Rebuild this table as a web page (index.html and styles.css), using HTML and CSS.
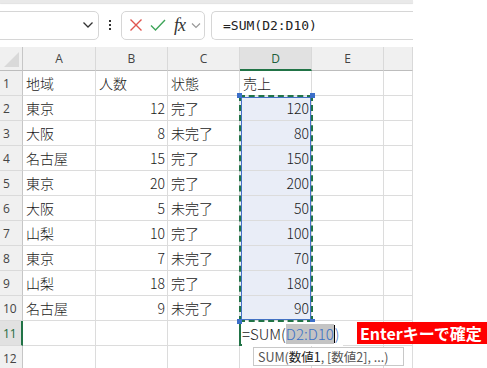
FILE: index.html
```html
<!DOCTYPE html>
<html lang="ja">
<head>
<meta charset="utf-8">
<link rel="stylesheet" href="styles.css">
</head>
<body>
<div class="app">
  <div class="topstrip"></div>
  <div class="fbar">
    <div class="namebox">
      <svg class="chev" width="12" height="8" viewBox="0 0 12 8"><path d="M1.5 1.5 L6 6 L10.5 1.5" fill="none" stroke="#333" stroke-width="1.3"/></svg>
    </div>
    <div class="dots"><span></span><span></span><span></span></div>
    <div class="fnbox">
      <svg width="14" height="14" viewBox="0 0 14 14"><path d="M1.5 1.5 L12.5 12.5 M12.5 1.5 L1.5 12.5" stroke="#e0554f" stroke-width="1.4" fill="none"/></svg>
      <svg width="16" height="14" viewBox="0 0 16 14"><path d="M1 7.5 L5.5 12 L15 2" stroke="#3fa55a" stroke-width="1.4" fill="none"/></svg>
      <span class="fx">fx</span>
      <svg width="10" height="7" viewBox="0 0 10 7"><path d="M1 1.5 L5 5.5 L9 1.5" fill="none" stroke="#999" stroke-width="1.2"/></svg>
    </div>
    <div class="formula">=SUM(D2:D10)</div>
  </div>
  <div class="sheet">
    <div class="grid">
      <div class="corner"><div class="tri"></div></div>
      <div class="ch">A</div><div class="ch">B</div><div class="ch">C</div><div class="ch chsel">D</div><div class="ch">E</div><div class="ch"></div>

      <div class="rh">1</div><div class="c">地域</div><div class="c">人数</div><div class="c">状態</div><div class="c">売上</div><div class="c"></div><div class="c"></div>
      <div class="rh">2</div><div class="c">東京</div><div class="c n">12</div><div class="c">完了</div><div class="c n sel">120</div><div class="c"></div><div class="c"></div>
      <div class="rh">3</div><div class="c">大阪</div><div class="c n">8</div><div class="c">未完了</div><div class="c n sel">80</div><div class="c"></div><div class="c"></div>
      <div class="rh">4</div><div class="c">名古屋</div><div class="c n">15</div><div class="c">完了</div><div class="c n sel">150</div><div class="c"></div><div class="c"></div>
      <div class="rh">5</div><div class="c">東京</div><div class="c n">20</div><div class="c">完了</div><div class="c n sel">200</div><div class="c"></div><div class="c"></div>
      <div class="rh">6</div><div class="c">大阪</div><div class="c n">5</div><div class="c">未完了</div><div class="c n sel">50</div><div class="c"></div><div class="c"></div>
      <div class="rh">7</div><div class="c">山梨</div><div class="c n">10</div><div class="c">完了</div><div class="c n sel">100</div><div class="c"></div><div class="c"></div>
      <div class="rh">8</div><div class="c">東京</div><div class="c n">7</div><div class="c">未完了</div><div class="c n sel">70</div><div class="c"></div><div class="c"></div>
      <div class="rh">9</div><div class="c">山梨</div><div class="c n">18</div><div class="c">完了</div><div class="c n sel">180</div><div class="c"></div><div class="c"></div>
      <div class="rh">10</div><div class="c">名古屋</div><div class="c n">9</div><div class="c">未完了</div><div class="c n sel">90</div><div class="c"></div><div class="c"></div>
      <div class="rh rhsel">11</div><div class="c"></div><div class="c"></div><div class="c"></div><div class="c active"></div><div class="c"></div><div class="c"></div>
      <div class="rh">12</div><div class="c"></div><div class="c"></div><div class="c"></div><div class="c"></div><div class="c"></div><div class="c"></div>
    </div>
    <div class="range">
      <span class="h tl"></span><span class="h tr"></span><span class="h bl"></span><span class="h br"></span>
    </div>
    <div class="edit">=SUM(<span class="ref">D2:D10</span><span class="caret"></span><span class="par">)</span></div>
    <div class="tip">SUM(<b>数値1</b>, [数値2], ...)</div>
    <div class="label">Enterキーで確定</div>
  </div>
</div>
</body>
</html>
```
FILE: styles.css
```css
* { box-sizing: border-box; }
html, body { margin: 0; padding: 0; background: #fff; }
body { width: 487px; height: 368px; overflow: hidden; font-family: "Noto Sans CJK JP", sans-serif; color: #222; }

.topstrip { height: 3px; width: 413px; background: #e9e9e9; box-shadow: 0 1px 1px rgba(0,0,0,0.12); }

.fbar { height: 44px; width: 413px; display: flex; align-items: center; position: relative; }
.namebox { width: 105px; height: 29px; margin-left: -6px; border: 1px solid #d6d6d6; border-radius: 5px; display: flex; align-items: center; justify-content: flex-end; padding-right: 4px; }
.dots { width: 22px; display: flex; flex-direction: column; align-items: center; gap: 2px; }
.dots span { width: 2px; height: 2px; background: #333; display: block; }
.fnbox { width: 84px; height: 29px; border: 1px solid #d6d6d6; border-radius: 5px; display: flex; align-items: center; padding-left: 7px; gap: 6px; }
.fnbox svg:nth-child(2) { margin-left: 1px; }
.fx { font-family: "Liberation Serif", serif; font-style: italic; font-size: 18px; color: #333; margin-left: 2px; letter-spacing: -1px; line-height: 1; }
.formula { margin-left: 6px; flex: 1; height: 29px; border: 1px solid #d6d6d6; border-right: none; border-radius: 5px 0 0 5px; font-family: "DejaVu Sans Mono", monospace; font-size: 13px; line-height: 27px; padding-left: 11px; color: #222; }

.sheet { position: relative; width: 413px; }
.grid { display: grid; grid-template-columns: 23px 73px 72px 72px 72px 72px 29px; grid-template-rows: 24px repeat(12, 25px); }
.corner { background: #f0f0f0; border-right: 1px solid #c6c6c6; border-bottom: 1px solid #bdbdbd; position: relative; }
.tri { position: absolute; right: 3px; bottom: 3px; width: 0; height: 0; border-left: 15px solid transparent; border-bottom: 15px solid #d9d9d9; }
.ch { background: #f0f0f0; border-right: 1px solid #d9d9d9; border-bottom: 1px solid #bdbdbd; font-family: "Open Sans", sans-serif; font-size: 12px; color: #444; text-align: center; line-height: 23px; }
.chsel { background: #e1e1e1; border-bottom: 2px solid #217346; color: #1d5e3a; }
.rh { background: #f0f0f0; border-right: 1px solid #c6c6c6; border-bottom: 1px solid #dadada; font-family: "Open Sans", sans-serif; font-size: 12px; color: #444; padding-left: 3px; line-height: 25px; }
.rhsel { background: #e1e1e1; border-right: 2px solid #217346; color: #1d6b3c; }
.c { border-right: 1px solid #dcdcdc; border-bottom: 1px solid #dcdcdc; font-size: 14px; font-weight: 300; line-height: 24px; padding: 0 2px 0 3px; white-space: nowrap; overflow: hidden; color: #1a1a1a; }
.n { text-align: right; padding-right: 2px; }
.sel { background: #e9edf7; }
.active { border-left: 2px solid #217346; border-bottom: 2px solid #217346; margin-left: -1px; }

.range { position: absolute; left: 239px; top: 48px; width: 74px; height: 227px; border: 2px dashed #217346; outline: 1px solid #4472c4; outline-offset: -3px; }
.h { position: absolute; width: 5px; height: 5px; background: #3b6fc9; }
.tl { left: -4px; top: -4px; }
.tr { right: -4px; top: -4px; }
.bl { left: -4px; bottom: -4px; }
.br { right: -4px; bottom: -4px; }

.edit { position: absolute; left: 242px; top: 275px; height: 24px; font-size: 15px; font-weight: 300; line-height: 24px; color: #1a1a1a; background: #fff; display: flex; align-items: center; padding-right: 3px; }
.ref { background: #c4c4c4; color: #3a6fc4; line-height: 20px; }
.caret { width: 1px; height: 18px; background: #000; }
.par { color: #3a6fc4; }
.tip { position: absolute; left: 253px; top: 300px; width: 151px; height: 19px; border: 1px solid #c8c8c8; background: #fff; font-size: 12.5px; line-height: 17px; color: #555; padding-left: 4px; white-space: nowrap; overflow: hidden; }
.tip b { font-weight: 400; color: #222; }
.label { position: absolute; left: 357px; top: 275px; width: 130px; height: 22px; background: #ff0000; color: #fff; font-weight: 700; font-size: 16px; line-height: 22px; padding-left: 3px; white-space: nowrap; }
```
